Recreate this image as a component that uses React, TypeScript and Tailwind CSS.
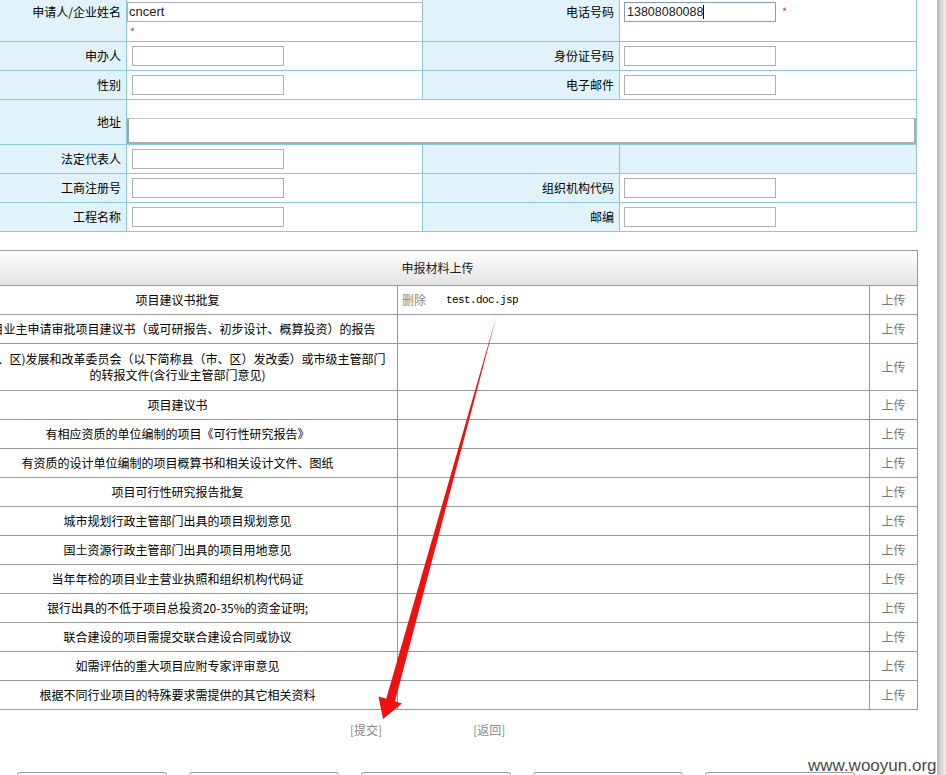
import React from "react";

const Inp = ({ right = false }: { right?: boolean }) => (
  <input
    readOnly
    className={
      right
        ? "ml-[4px] h-[20px] w-[152px] border border-[#b0b0b0] bg-white outline-none"
        : "ml-[5px] h-[20px] w-[152px] border border-[#b0b0b0] bg-white outline-none"
    }
  />
);

const Label = ({ children }: { children?: React.ReactNode }) => (
  <div className="flex h-full items-center justify-end border-r border-[#8dc8d8] bg-[#e0f3fb] pr-[5px] leading-[18px]">
    {children}
  </div>
);

const Cell = ({ children, blue = false }: { children?: React.ReactNode; blue?: boolean }) => (
  <div
    className={
      blue
        ? "flex h-full items-center border-r border-[#8dc8d8] bg-[#e0f3fb]"
        : "flex h-full items-center border-r border-[#8dc8d8] bg-white"
    }
  >
    {children}
  </div>
);

type Row = { text: React.ReactNode; tall?: boolean; file?: boolean };

const rows: Row[] = [
  { text: "项目建议书批复", file: true },
  { text: "项目业主申请审批项目建议书（或可研报告、初步设计、概算投资）的报告" },
  {
    text: (
      <>
        县(市、区)发展和改革委员会（以下简称县（市、区）发改委）或市级主管部门
        <br />
        的转报文件(含行业主管部门意见)
      </>
    ),
    tall: true,
  },
  { text: "项目建议书" },
  { text: "有相应资质的单位编制的项目《可行性研究报告》" },
  { text: "有资质的设计单位编制的项目概算书和相关设计文件、图纸" },
  { text: "项目可行性研究报告批复" },
  { text: "城市规划行政主管部门出具的项目规划意见" },
  { text: "国土资源行政主管部门出具的项目用地意见" },
  { text: "当年年检的项目业主营业执照和组织机构代码证" },
  { text: "银行出具的不低于项目总投资20-35%的资金证明;" },
  { text: "联合建设的项目需提交联合建设合同或协议" },
  { text: "如需评估的重大项目应附专家评审意见" },
  { text: "根据不同行业项目的特殊要求需提供的其它相关资料" },
];

export default function App() {
  return (
    <div className="relative flex h-[775px] w-[946px] overflow-hidden bg-white font-['Noto_Sans_CJK_SC',sans-serif] text-[12px] text-black">
      <div className="flex w-[937px] flex-col">
        {/* Form table */}
        <div className="ml-[-70px] w-[987px]">
          <div className="grid h-[42px] grid-cols-[197px_296px_197px_297px] border-b border-[#8dc8d8]">
            <div className="border-r border-[#8dc8d8] bg-[#e0f3fb] pr-[5px] pt-[3px] text-right leading-[18px]">
              申请人/企业姓名
            </div>
            <div className="border-r border-[#8dc8d8] bg-white pt-[2px]">
              <div className="h-[20px] w-[296px] border border-[#a9b2bb] bg-white pl-[1px] font-['Liberation_Sans',sans-serif] text-[13px] leading-[18px] text-[#222]">
                cncert
              </div>
              <div className="mt-[2px] pl-[3px] text-[11px] leading-[14px] text-[#cc3355]">*</div>
            </div>
            <div className="border-r border-[#8dc8d8] bg-[#e0f3fb] pr-[5px] pt-[3px] text-right leading-[18px]">
              电话号码
            </div>
            <div className="flex items-start border-r border-[#8dc8d8] bg-white pl-[4px] pt-[2px]">
              <div className="flex h-[20px] w-[152px] items-center border border-[#7f9db9] bg-white pl-[2px] font-['Liberation_Sans',sans-serif] text-[12.5px] leading-[18px] text-[#222]">
                13808080088
                <span className="inline-block h-[14px] w-[1px] bg-black" />
              </div>
              <span className="ml-[6px] mt-[2px] text-[11px] leading-[14px] text-[#cc3355]">*</span>
            </div>
          </div>

          <div className="grid h-[29px] grid-cols-[197px_296px_197px_297px] border-b border-[#8dc8d8]">
            <Label>申办人</Label>
            <Cell>
              <Inp />
            </Cell>
            <Label>身份证号码</Label>
            <Cell>
              <Inp right />
            </Cell>
          </div>

          <div className="grid h-[29px] grid-cols-[197px_296px_197px_297px] border-b border-[#8dc8d8]">
            <Label>性别</Label>
            <Cell>
              <Inp />
            </Cell>
            <Label>电子邮件</Label>
            <Cell>
              <Inp right />
            </Cell>
          </div>

          <div className="grid h-[45px] grid-cols-[197px_790px] border-b border-[#8dc8d8]">
            <Label>地址</Label>
            <div className="flex flex-col justify-end border-r border-[#8dc8d8] bg-white">
              <div className="h-[26px] w-[789px] border border-b-2 border-l-2 border-r-2 border-[#acacac] border-l-[#98a6b6] border-t-[#c4c4c4] bg-white" />
            </div>
          </div>

          <div className="grid h-[29px] grid-cols-[197px_296px_197px_297px] border-b border-[#8dc8d8]">
            <Label>法定代表人</Label>
            <Cell>
              <Inp />
            </Cell>
            <Label />
            <Cell blue />
          </div>

          <div className="grid h-[29px] grid-cols-[197px_296px_197px_297px] border-b border-[#8dc8d8]">
            <Label>工商注册号</Label>
            <Cell>
              <Inp />
            </Cell>
            <Label>组织机构代码</Label>
            <Cell>
              <Inp right />
            </Cell>
          </div>

          <div className="grid h-[29px] grid-cols-[197px_296px_197px_297px] border-b border-[#8dc8d8]">
            <Label>工程名称</Label>
            <Cell>
              <Inp />
            </Cell>
            <Label>邮编</Label>
            <Cell>
              <Inp right />
            </Cell>
          </div>
        </div>

        {/* Materials table */}
        <div className="ml-[-43px] mt-[18px] w-[961px] border border-[#999]">
          <div className="flex h-[34px] items-center justify-center bg-linear-to-b from-white to-[#e3e3e3] text-[#222]">
            申报材料上传
          </div>
          {rows.map((r, i) => (
            <div
              key={i}
              className={
                r.tall
                  ? "grid h-[47px] grid-cols-[440px_472px_47px] border-t border-[#999]"
                  : "grid h-[29px] grid-cols-[440px_472px_47px] border-t border-[#999]"
              }
            >
              <div className="flex items-center justify-center whitespace-nowrap border-r border-[#999] text-center leading-[16px]">
                <span>{r.text}</span>
              </div>
              <div className="flex items-center border-r border-[#999] pl-[4px]">
                {r.file && (
                  <>
                    <span className="text-[#888]">删除</span>
                    <span className="ml-[20px] font-['Liberation_Mono',monospace] text-[11px] tracking-[-0.6px] text-black">
                      test.doc.jsp
                    </span>
                  </>
                )}
              </div>
              <div className="flex items-center justify-center text-[#777]">上传</div>
            </div>
          ))}
        </div>

        {/* Buttons */}
        <div className="mt-[11px] flex gap-[91px] pl-[350px] leading-[18px] text-[#888]">
          <span>[提交]</span>
          <span>[返回]</span>
        </div>

        {/* Bottom boxes */}
        <div className="mt-[33px] flex gap-[22px] pl-[17px]">
          <div className="h-[26px] w-[150px] rounded-[3px] border border-[#999] bg-white" />
          <div className="h-[26px] w-[150px] rounded-[3px] border border-[#999] bg-white" />
          <div className="h-[26px] w-[150px] rounded-[3px] border border-[#999] bg-white" />
          <div className="h-[26px] w-[150px] rounded-[3px] border border-[#999] bg-white" />
          <div className="h-[26px] w-[150px] rounded-[3px] border border-[#999] bg-white" />
        </div>
      </div>

      {/* right window edge */}
      <div className="h-full w-[9px] bg-linear-to-r from-[#b8b8b8] via-[#dadada] to-[#efefef]" />

      {/* red arrow annotation */}
      <svg
        className="pointer-events-none absolute left-0 top-0"
        width="946"
        height="775"
        viewBox="0 0 946 775"
      >
        <path
          d="M496.5 316 L395 701.2 L402 703.5 L383 719 L378.5 696.5 L386.2 698.8 Z"
          fill="#ee1111"
        />
      </svg>

      {/* watermark */}
      <div className="absolute left-[808px] top-[756px] font-['Liberation_Sans',sans-serif] text-[17px] leading-[20px] text-[#4a4a4a]">
        www.wooyun.org
      </div>
    </div>
  );
}
